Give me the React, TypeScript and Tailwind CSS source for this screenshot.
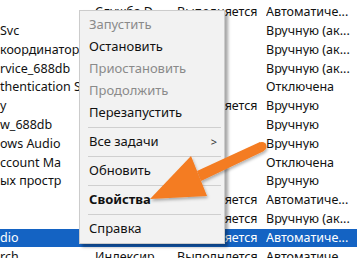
import React from 'react';

const rows = [
  { name: '', desc: 'Служба D', status: 'Выполняется', start: 'Автоматиче...' },
  { name: 'Svc', desc: 'Обеспечи', status: '', start: 'Вручную (ак...' },
  { name: 'координатор', desc: 'Координ', status: '', start: 'Вручную (ак...' },
  { name: 'rvice_688db', desc: 'Служба', status: '', start: 'Вручную (ак...' },
  { name: 'thentication S', desc: 'Служба', status: '', start: 'Отключена' },
  { name: 'y', desc: 'Служба', status: 'Выполняется', start: 'Вручную' },
  { name: 'w_688db', desc: 'Служба', status: '', start: 'Вручную' },
  { name: 'ows Audio', desc: 'Управлен', status: '', start: 'Вручную' },
  { name: 'ccount Ma', desc: 'Служба', status: '', start: 'Отключена' },
  { name: 'ых простр', desc: 'Служба', status: '', start: 'Вручную' },
  { name: '', desc: 'Служба', status: 'Выполняется', start: 'Автоматиче...' },
  { name: '', desc: 'Служба', status: 'Выполняется', start: 'Вручную (ак...' },
  { name: 'dio', desc: 'Управлен', status: 'Выполняется', start: 'Автоматиче...', selected: true },
  { name: 'rch', desc: 'Индексир', status: 'Выполнлется', start: 'Автоматиче...' },
];

type Item = { label: string; disabled?: boolean; bold?: boolean; submenu?: boolean } | 'sep';

const menu: Item[] = [
  { label: 'Запустить', disabled: true },
  { label: 'Остановить' },
  { label: 'Приостановить', disabled: true },
  { label: 'Продолжить', disabled: true },
  { label: 'Перезапустить' },
  'sep',
  { label: 'Все задачи', submenu: true },
  'sep',
  { label: 'Обновить' },
  'sep',
  { label: 'Свойства', bold: true },
  'sep',
  { label: 'Справка' },
];

export default function App() {
  return (
    <div className="relative w-[357px] h-[258px] overflow-hidden bg-white text-[12.5px] text-[#111] font-['Noto_Sans',sans-serif]">
      {/* Service list */}
      <div className="pt-[3px]">
        {rows.map((r, i) => (
          <div
            key={i}
            className={`flex items-center h-[18.8px] leading-none whitespace-nowrap ${r.selected ? 'bg-[#1463c3] text-white' : ''}`}
          >
            <div className="w-[95px] overflow-hidden">{r.name}</div>
            <div className="w-[82px] overflow-hidden">{r.desc}</div>
            <div className="w-[89px] overflow-hidden">{r.status}</div>
            <div className="flex-1 overflow-hidden">{r.start}</div>
          </div>
        ))}
      </div>

      {/* Context menu */}
      <div className="absolute left-[79px] top-[10px] w-[146px] py-[3px] bg-[#f2f2f2] border border-[#cccccc] shadow-[3px_3px_3px_rgba(0,0,0,0.35)] text-[13px]">
        {menu.map((m, i) =>
          m === 'sep' ? (
            <div key={i} className="h-[7px] flex items-center pl-[8px] pr-[3px]">
              <div className="h-px w-full bg-[#cfcfcf]" />
            </div>
          ) : (
            <div
              key={i}
              className={`h-[22px] flex items-center justify-between pl-[9px] pr-[7px] ${m.disabled ? 'text-[#8a8a8a]' : 'text-[#111]'} ${m.bold ? 'font-bold' : ''}`}
            >
              <span>{m.label}</span>
              {m.submenu && <span className="text-[11px] text-[#333]">&gt;</span>}
            </div>
          )
        )}
      </div>

      {/* Orange arrow */}
      <svg className="absolute left-0 top-0 pointer-events-none" width="357" height="258" viewBox="0 0 357 258">
        <defs>
          <filter id="sh" x="-20%" y="-20%" width="140%" height="140%">
            <feDropShadow dx="1" dy="2" stdDeviation="1.5" floodColor="#000" floodOpacity="0.3" />
          </filter>
        </defs>
        <g filter="url(#sh)" fill="#f47b20">
          <polygon points="150,199 191,156 207,196" />
          <polygon points="201,181 197,171 260,142 264,151" />
          <circle cx="262" cy="146.5" r="4.5" />
        </g>
      </svg>
    </div>
  );
}
